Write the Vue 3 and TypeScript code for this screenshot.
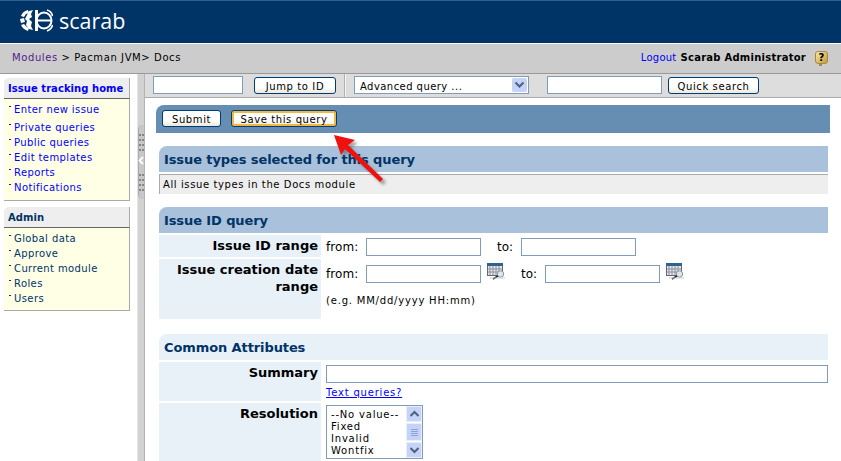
<script setup lang="ts">
const trackingLinks = ['Private queries', 'Public queries', 'Edit templates', 'Reports', 'Notifications']
const adminLinks = ['Global data', 'Approve', 'Current module', 'Roles', 'Users']
const resolutions = ['--No value--', 'Fixed', 'Invalid', 'Wontfix']
</script>

<template>
  <div class="page">
    <header class="banner">
      <svg class="logo-mark" width="33" height="23" viewBox="0 0 33 23">
        <g fill="#fff">
          <path d="M8 1 C4 2 2 4 1 7 L4 8 L6 5 L9 4 Z" />
          <path d="M0 10 L4 9 L5 13 L1 14 Z" />
          <path d="M1 16 L4 15 L7 18 L9 19 L8 22 C5 21 2 19 1 16 Z" />
          <path d="M9 2 L13 1 L11 5 L12 8 L9 10 L12 13 L11 17 L13 21 L9 20 L6 16 L7 12 L5 10 L7 6 Z" />
          <path d="M15 1 L18 1 L18 22 L15 22 Z" />
        </g>
        <g fill="none" stroke="#fff">
          <ellipse cx="24" cy="11.5" rx="7.5" ry="8" stroke-width="2" />
          <path d="M17 11.5 H31" stroke-width="2" />
          <path d="M27 1 C30 2 32 4 32.5 7 M32.5 16 C32 19 30 21 27 22" stroke-width="1.6" />
        </g>
      </svg>
      <span class="logo-text">scarab</span>
    </header>

    <nav class="crumbs">
      <div class="trail"><a class="visited">Modules</a> &gt; Pacman JVM&gt; Docs</div>
      <div class="user">
        <a class="link">Logout</a>
        <b>Scarab Administrator</b>
        <span class="help">?</span>
      </div>
    </nav>

    <div class="main">
      <aside class="sidebar">
        <section class="box">
          <h3 class="box-title home">Issue tracking home</h3>
          <ul class="box-list">
            <li class="first"><a class="link">Enter new issue</a></li>
            <li v-for="item in trackingLinks" :key="item"><a class="link">{{ item }}</a></li>
          </ul>
        </section>
        <section class="box">
          <h3 class="box-title">Admin</h3>
          <ul class="box-list admin">
            <li v-for="item in adminLinks" :key="item"><a>{{ item }}</a></li>
          </ul>
        </section>
      </aside>

      <div class="splitter">
        <div class="grip">
          <i class="dots"></i>
          <svg class="grip-arrow" width="6" height="9" viewBox="0 0 6 9"><path d="M5 1 L1.5 4.5 L5 8" fill="none" stroke="#fff" stroke-width="1.8" /></svg>
          <i class="dots"></i>
        </div>
      </div>

      <main class="content">
        <div class="toolbar">
          <input class="field id-field" />
          <button class="btn jump">Jump to ID</button>
          <span class="sep"></span>
          <div class="select">
            <span>Advanced query ...</span>
            <span class="select-arrow">
              <svg width="11" height="8" viewBox="0 0 11 8"><path d="M1.5 1.5 L5.5 5.5 L9.5 1.5" fill="none" stroke="#4d6185" stroke-width="2" /></svg>
            </span>
          </div>
          <input class="field search-field" />
          <button class="btn quick">Quick search</button>
        </div>

        <div class="body">
          <div class="actions">
            <button class="btn submit">Submit</button>
            <button class="btn save">Save this query</button>
          </div>

          <div class="form">
            <h2 class="heading">Issue types selected for this query</h2>
            <div class="note-row">All issue types in the Docs module</div>

            <h2 class="heading second">Issue ID query</h2>
            <div class="row id-row">
              <div class="label">Issue ID range</div>
              <div class="cell inline">
                <span class="from">from:</span>
                <input class="field range" />
                <span class="to">to:</span>
                <input class="field range" />
              </div>
            </div>
            <div class="row date-row">
              <div class="label">Issue creation date range</div>
              <div class="cell">
                <div class="inline">
                  <span class="from">from:</span>
                  <input class="field range" />
                  <svg class="cal" width="19" height="17" viewBox="0 0 19 17">
                    <rect x="0.5" y="0.5" width="15" height="12" fill="#e4e8ee" stroke="#667" />
                    <rect x="0" y="0" width="16" height="3" fill="#2f628f" />
                    <path d="M3 3v9M6 3v9M9 3v9M12 3v9M1 6h14M1 9h14" stroke="#8a909a" />
                    <circle cx="13.5" cy="11" r="3.2" fill="#dfe6ea" stroke="#8c949c" />
                    <path d="M11 13 L6 16" stroke="#222" stroke-width="1.6" />
                    <path d="M3 15h15" stroke="#ccc" />
                  </svg>
                  <span class="to wide">to:</span>
                  <input class="field range" />
                  <svg class="cal" width="19" height="17" viewBox="0 0 19 17">
                    <rect x="0.5" y="0.5" width="15" height="12" fill="#e4e8ee" stroke="#667" />
                    <rect x="0" y="0" width="16" height="3" fill="#2f628f" />
                    <path d="M3 3v9M6 3v9M9 3v9M12 3v9M1 6h14M1 9h14" stroke="#8a909a" />
                    <circle cx="13.5" cy="11" r="3.2" fill="#dfe6ea" stroke="#8c949c" />
                    <path d="M11 13 L6 16" stroke="#222" stroke-width="1.6" />
                    <path d="M3 15h15" stroke="#ccc" />
                  </svg>
                </div>
                <div class="hint">(e.g. MM/dd/yyyy HH:mm)</div>
              </div>
            </div>

            <h2 class="heading pale">Common Attributes</h2>
            <div class="row summary-row">
              <div class="label">Summary</div>
              <div class="cell">
                <input class="field summary" />
                <a class="link queries">Text queries?</a>
              </div>
            </div>
            <div class="row resolution-row">
              <div class="label">Resolution</div>
              <div class="cell">
                <div class="listbox">
                  <div class="options">
                    <div v-for="opt in resolutions" :key="opt">{{ opt }}</div>
                  </div>
                  <div class="scroll">
                    <span class="scroll-btn">
                      <svg width="11" height="8" viewBox="0 0 11 8"><path d="M1.5 6 L5.5 2 L9.5 6" fill="none" stroke="#4d6185" stroke-width="2" /></svg>
                    </span>
                    <span class="scroll-thumb"><i></i></span>
                    <span class="scroll-btn">
                      <svg width="11" height="8" viewBox="0 0 11 8"><path d="M1.5 2 L5.5 6 L9.5 2" fill="none" stroke="#4d6185" stroke-width="2" /></svg>
                    </span>
                  </div>
                </div>
              </div>
            </div>
          </div>
        </div>
      </main>
    </div>

    <!-- annotation drawn on top of the screenshot -->
    <svg class="arrow" width="70" height="70" viewBox="0 0 70 70">
      <defs>
        <filter id="soft" x="-20%" y="-20%" width="140%" height="140%">
          <feGaussianBlur stdDeviation="1.5" />
        </filter>
      </defs>
      <path d="M3 4 L24 9 L17 14 L52 48 L49 51 L14 18 L10 24 Z" fill="#555" opacity="0.55" filter="url(#soft)" transform="translate(3 3)" />
      <path d="M3 4 L24 9 L17 14 L52 48 L49 51 L14 18 L10 24 Z" fill="#f01010" />
    </svg>
  </div>
</template>

<style>
html, body {
  margin: 0;
  background: #fff;
}
</style>

<style scoped>
.page {
  position: relative;
  width: 841px;
  height: 461px;
  overflow: hidden;
  background: #fff;
  color: #000;
  font-family: "DejaVu Sans", Verdana, sans-serif;
  font-size: 10px;
  letter-spacing: 0.25px;
}
a { cursor: pointer; }
.link { color: #0000ff; }
.visited { color: #551a8b; }

.banner {
  box-sizing: border-box;
  height: 44px;
  background: #003366;
  border-top: 1px solid #2f5f8f;
  border-bottom: 1px solid #fff;
  display: flex;
  align-items: center;
  padding-left: 20px;
  gap: 6px;
}
.logo-text {
  font-family: "Open Sans", sans-serif;
  font-size: 21.5px;
  font-weight: 400;
  letter-spacing: 0;
  color: #fff;
  line-height: 1;
  padding-bottom: 2px;
}
.logo-mark { margin-top: -3px; }

.crumbs {
  box-sizing: border-box;
  height: 30px;
  background: #cccccc;
  border-bottom: 1px solid #999;
  display: flex;
  justify-content: space-between;
  align-items: center;
  padding: 0 13px 3px 12px;
}
.trail { letter-spacing: 0.6px; }
.user {
  display: flex;
  align-items: center;
  gap: 4px;
}
.help {
  position: relative;
  box-sizing: border-box;
  width: 13px;
  height: 13px;
  margin: 1px 0 0 5px;
  background: linear-gradient(135deg, #f7e9a8, #c49a3c);
  border: 1px solid #a88a40;
  border-radius: 3px;
  font-size: 10px;
  font-weight: bold;
  text-align: center;
  line-height: 11px;
  letter-spacing: 0;
}
.help::after {
  content: '';
  position: absolute;
  left: 3px;
  bottom: -3px;
  width: 3px;
  height: 2px;
  background: #a88a40;
}

.main {
  display: flex;
  height: 387px;
}
.sidebar {
  box-sizing: border-box;
  width: 137px;
  padding: 4px 7px 0 4px;
  display: flex;
  flex-direction: column;
  gap: 6px;
}
.box-title {
  box-sizing: border-box;
  height: 21px;
  margin: 0;
  padding-left: 4px;
  background: #eeeeee;
  border-bottom: 1px solid #666;
  border-right: 1px solid #aaa;
  border-top-left-radius: 5px;
  font-size: 10px;
  line-height: 21px;
  letter-spacing: 0.05px;
  color: #003366;
}
.box-title.home { color: #0000ff; }
.box-list {
  list-style: none;
  margin: 0;
  padding: 3px 0 5px 10px;
  background: #ffffe6;
  border-right: 1px solid #aaa;
  border-bottom: 1px solid #aaa;
  color: #003366;
  letter-spacing: 0.4px;
}
.box-list.admin { padding-bottom: 4px; }
.box-list li {
  position: relative;
  height: 15px;
  line-height: 15px;
}
.box-list li.first { height: 18px; }
.box-list li::before {
  content: '';
  position: absolute;
  left: -5px;
  top: 4px;
  width: 2px;
  height: 1px;
  background: #003366;
}

.splitter {
  box-sizing: border-box;
  width: 8px;
  background: #d2d2d2;
  border-left: 1px solid #e4e4e4;
  border-right: 1px solid #b4b4b4;
}
.grip {
  box-sizing: border-box;
  margin-top: 51px;
  height: 74px;
  padding: 9px 1px 0 0;
  background: #c8c8c8;
  border-left: 1px solid #aaa;
  border-radius: 5px 0 0 5px;
  display: flex;
  flex-direction: column;
  align-items: center;
}
.grip-arrow { margin: 20px 0 9px -1px; flex: none; }
.dots {
  flex: none;
  width: 2px;
  height: 2px;
  margin-left: -3px;
  background: #858585;
  box-shadow: 3px 0 #858585, 0 5px #858585, 3px 5px #858585, 0 10px #858585, 3px 10px #858585, 0 15px #858585, 3px 15px #858585;
}

.content {
  flex: 1;
  min-width: 0;
}
.toolbar {
  box-sizing: border-box;
  height: 24px;
  display: flex;
  align-items: center;
  padding: 0 0 1px 8px;
  background: #dddddd;
  border-bottom: 1px solid #aaa;
}
.field {
  box-sizing: border-box;
  display: block;
  height: 18px;
  padding: 0 2px;
  background: #fff;
  border: 1px solid #7f9db9;
  border-radius: 0;
  outline: none;
}
.id-field { width: 90px; }
.search-field { width: 115px; margin-left: 18px; }
.btn {
  box-sizing: border-box;
  height: 17px;
  padding: 2px 0 0;
  background: linear-gradient(#ffffff 60%, #ece9dc);
  border: 1px solid #003c74;
  border-radius: 3px;
  color: #000;
  font-family: inherit;
  font-size: 10px;
  letter-spacing: 0.6px;
  line-height: 13px;
}
.jump { width: 82px; margin-left: 11px; }
.quick { width: 91px; margin-left: 6px; }
.sep {
  width: 1px;
  height: 23px;
  margin: 0 8px 0 8px;
  background: #b0b0b0;
  border-right: 1px solid #f4f4f4;
}
.select {
  box-sizing: border-box;
  width: 175px;
  height: 18px;
  display: flex;
  align-items: center;
  justify-content: space-between;
  padding: 2px 1px 0 5px;
  background: #fff;
  border: 1px solid #7f9db9;
  letter-spacing: 0.45px;
}
.select-arrow {
  width: 15px;
  height: 14px;
  margin-top: -2px;
  display: flex;
  align-items: center;
  justify-content: center;
  background: #c5d3f6;
  border-radius: 2px;
}

.body { padding: 7px 11px 0 11px; }
.actions {
  box-sizing: border-box;
  height: 28px;
  display: flex;
  align-items: center;
  gap: 10px;
  padding: 0 0 1px 6px;
  background: #668eb3;
  border-top-left-radius: 8px;
}
.submit { width: 59px; }
.save {
  width: 106px;
  border-color: #003c74;
  box-shadow: inset 0 0 0 2px #f6b73c;
}
.form { padding: 13px 2px 0 3px; }
.heading {
  box-sizing: border-box;
  height: 26px;
  margin: 0;
  padding: 1px 0 0 5px;
  background: #a9c1da;
  border-top-left-radius: 8px;
  color: #003366;
  font-size: 13px;
  font-weight: bold;
  line-height: 26px;
  letter-spacing: -0.1px;
}
.heading.second { margin-top: 13px; }
.heading.pale {
  margin-top: 15px;
  background: #e8f0f8;
}
.note-row {
  box-sizing: border-box;
  height: 20px;
  margin-top: 2px;
  padding-left: 3px;
  background: #eeeeee;
  border-top: 1px solid #aaa;
  border-left: 1px solid #aaa;
  line-height: 19px;
  letter-spacing: 0.6px;
}
.row {
  display: grid;
  grid-template-columns: 162px 1fr;
  margin-top: 2px;
}
.label {
  padding: 2px 3px 0 0;
  background: #e8f0f8;
  text-align: right;
  font-size: 13px;
  font-weight: bold;
  line-height: 17px;
  letter-spacing: 0;
}
.cell { padding: 2px 0 0 5px; min-width: 0; }
.inline { display: flex; align-items: center; }
.id-row { height: 22px; }
.date-row { height: 60px; }
.summary-row { height: 39px; }
.resolution-row { height: 58px; }
.from {
  width: 40px;
  font-size: 12px;
  letter-spacing: 0.1px;
}
.to {
  width: 24px;
  margin-left: 16px;
  font-size: 12px;
  letter-spacing: 0;
}
.to.wide { margin-left: 15px; }
.range { width: 115px; }
.date-row .cell { padding-top: 6px; }
.cal { margin: -5px 0 0 6px; }
.hint { margin-top: 12px; letter-spacing: 0.8px; }
.summary { width: 100%; height: 18px; margin-top: 1px; }
.queries { display: block; margin-top: 4px; text-decoration: underline; letter-spacing: 0.8px; }
.listbox {
  box-sizing: border-box;
  width: 97px;
  height: 54px;
  display: flex;
  justify-content: space-between;
  background: #fff;
  border: 1px solid #7f9db9;
}
.options {
  padding: 3px 0 0 4px;
  line-height: 12px;
  letter-spacing: 0.8px;
}
.scroll {
  width: 16px;
  display: flex;
  flex-direction: column;
  gap: 1px;
}
.scroll-btn {
  height: 16px;
  display: flex;
  align-items: center;
  justify-content: center;
  background: #c5d3f6;
  border-radius: 2px;
  box-shadow: inset 0 0 0 1px #e8eefc;
}
.scroll-thumb {
  flex: 1;
  display: flex;
  align-items: center;
  justify-content: center;
  background: #c5d3f6;
  border-radius: 2px;
  box-shadow: inset 0 0 0 1px #e8eefc;
}
.scroll-thumb i {
  width: 7px;
  height: 7px;
  background: repeating-linear-gradient(#8ea4d8 0 1px, transparent 1px 2px);
}
.arrow {
  position: absolute;
  left: 331px;
  top: 131px;
}
</style>
